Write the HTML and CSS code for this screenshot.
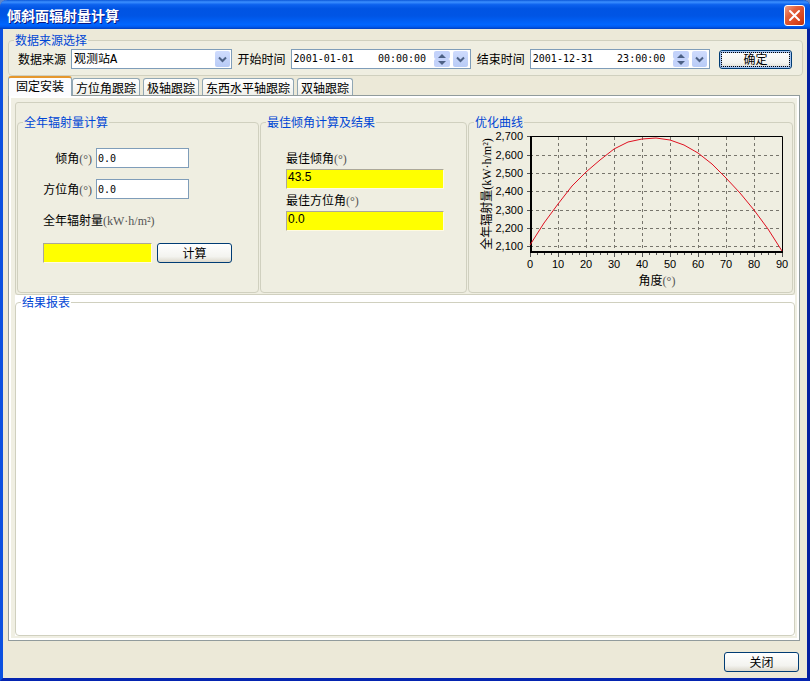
FILE: index.html
```html
<!DOCTYPE html>
<html lang="zh-CN">
<head>
  <meta charset="UTF-8">
  <meta name="viewport" content="width=device-width, initial-scale=1.0">
  <title>倾斜面辐射量计算</title>
  <link rel="stylesheet" href="styles.css">
</head>
<body>
  <div class="window">
    <header class="titlebar">
      <h1>倾斜面辐射量计算</h1>
      <button class="close-x" aria-label="关闭窗口">
        <svg width="13" height="13" viewBox="0 0 13 13"><path d="M2 2L11 11M11 2L2 11" stroke="#fff" stroke-width="2" stroke-linecap="round"/></svg>
      </button>
    </header>

    <main class="content">
      <fieldset class="source">
        <legend>数据来源选择</legend>
        <div class="source-row">
          <label for="station">数据来源</label>
          <div class="box combo">
            <select id="station">
              <option>观测站A</option>
            </select>
            <span class="drop combo-arrow"><svg width="9" height="7" viewBox="0 0 9 7"><path d="M1 1.5L4.5 5L8 1.5" /></svg></span>
          </div>
          <label for="start">开始时间</label>
          <div class="box datetime">
            <input type="text" id="start" value="2001-01-01    00:00:00">
            <span class="spinner">
              <button aria-label="增加"><svg width="8" height="5" viewBox="0 0 8 5"><path d="M0 5L4 1L8 5Z"/></svg></button>
              <button aria-label="减少"><svg width="8" height="5" viewBox="0 0 8 5"><path d="M0 0L4 4L8 0Z"/></svg></button>
            </span>
            <button class="drop" aria-label="选择日期"><svg width="9" height="7" viewBox="0 0 9 7"><path d="M1 1.5L4.5 5L8 1.5"/></svg></button>
          </div>
          <label for="end">结束时间</label>
          <div class="box datetime">
            <input type="text" id="end" value="2001-12-31    23:00:00">
            <span class="spinner">
              <button aria-label="增加"><svg width="8" height="5" viewBox="0 0 8 5"><path d="M0 5L4 1L8 5Z"/></svg></button>
              <button aria-label="减少"><svg width="8" height="5" viewBox="0 0 8 5"><path d="M0 0L4 4L8 0Z"/></svg></button>
            </span>
            <button class="drop" aria-label="选择日期"><svg width="9" height="7" viewBox="0 0 9 7"><path d="M1 1.5L4.5 5L8 1.5"/></svg></button>
          </div>
          <button class="btn btn-ok">确定</button>
        </div>
      </fieldset>

      <div class="tabs" role="tablist">
        <button class="tab active" role="tab" aria-selected="true">固定安装</button>
        <button class="tab" role="tab">方位角跟踪</button>
        <button class="tab" role="tab">极轴跟踪</button>
        <button class="tab" role="tab">东西水平轴跟踪</button>
        <button class="tab" role="tab">双轴跟踪</button>
      </div>

      <section class="tab-panel" role="tabpanel">
        <div class="panel-inner">
          <div class="groups">
            <fieldset>
              <legend>全年辐射量计算</legend>
              <div class="form">
                <div class="form-row">
                  <label for="tilt">倾角<span class="unit">(°)</span></label>
                  <input class="box" type="text" id="tilt" value="0.0">
                </div>
                <div class="form-row">
                  <label for="azimuth">方位角<span class="unit">(°)</span></label>
                  <input class="box" type="text" id="azimuth" value="0.0">
                </div>
                <label class="total-label" for="total">全年辐射量<span class="unit">(kW·h/m²)</span></label>
                <div class="calc-row">
                  <input class="output" type="text" id="total" readonly>
                  <button class="btn">计算</button>
                </div>
              </div>
            </fieldset>

            <fieldset>
              <legend>最佳倾角计算及结果</legend>
              <div class="best">
                <label for="bestTilt">最佳倾角<span class="unit">(°)</span></label>
                <input class="output" type="text" id="bestTilt" value="43.5" readonly>
                <label for="bestAzimuth">最佳方位角<span class="unit">(°)</span></label>
                <input class="output" type="text" id="bestAzimuth" value="0.0" readonly>
              </div>
            </fieldset>

            <fieldset>
              <legend>优化曲线</legend>
              <svg class="chart" viewBox="-2 0 323 160">
                <!-- grid -->
                <path class="grid" d="M59 26.5H311M59 44.5H311M59 62.5H311M59 81.5H311M59 99.5H311M59 117.5H311M87.5 8V123M115.5 8V123M143.5 8V123M171.5 8V123M199.5 8V123M227.5 8V123M255.5 8V123M283.5 8V123"/>
                <!-- frame and axes -->
                <path class="frame" d="M59.5 7.5H311.5V123.5"/>
                <path class="axis" d="M60 7V123H312"/>
                <path class="ticks" d="M56 7.5H59M56 26.5H59M56 44.5H59M56 62.5H59M56 81.5H59M56 99.5H59M56 117.5H59M59.5 124V128M87.5 124V128M115.5 124V128M143.5 124V128M171.5 124V128M199.5 124V128M227.5 124V128M255.5 124V128M283.5 124V128M311.5 124V128"/>
                <path class="ticks" d="M66.5 124V126M73.5 124V126M80.5 124V126M94.5 124V126M101.5 124V126M108.5 124V126M122.5 124V126M129.5 124V126M136.5 124V126M150.5 124V126M157.5 124V126M164.5 124V126M178.5 124V126M185.5 124V126M192.5 124V126M206.5 124V126M213.5 124V126M220.5 124V126M234.5 124V126M241.5 124V126M248.5 124V126M262.5 124V126M269.5 124V126M276.5 124V126M290.5 124V126M297.5 124V126M304.5 124V126"/>
                <polyline class="curve" points="59,116 73,94 87,75 101,57 115,43 129,31 143,20 157,13 171,10 185,9 199,11 213,16 227,24 241,35 255,49 269,64 283,81 297,100 311,122"/>
                <g class="y-labels">
                  <text x="52" y="11">2,700</text>
                  <text x="52" y="30">2,600</text>
                  <text x="52" y="48">2,500</text>
                  <text x="52" y="66">2,400</text>
                  <text x="52" y="85">2,300</text>
                  <text x="52" y="103">2,200</text>
                  <text x="52" y="121">2,100</text>
                </g>
                <g class="x-labels">
                  <text x="59" y="139">0</text>
                  <text x="87" y="139">10</text>
                  <text x="115" y="139">20</text>
                  <text x="143" y="139">30</text>
                  <text x="171" y="139">40</text>
                  <text x="199" y="139">50</text>
                  <text x="227" y="139">60</text>
                  <text x="255" y="139">70</text>
                  <text x="283" y="139">80</text>
                  <text x="311" y="139">90</text>
                </g>
                <text class="axis-title" x="186" y="156">角度<tspan class="unit">(°)</tspan></text>
                <text class="axis-title" transform="translate(20 65) rotate(-90)">全年辐射量<tspan class="unit-y">(kW·h/m²)</tspan></text>
              </svg>
            </fieldset>
          </div>

          <div class="report">
            <fieldset>
              <legend>结果报表</legend>
            </fieldset>
          </div>
        </div>
      </section>

      <footer class="footer">
        <button class="btn">关闭</button>
      </footer>
    </main>
  </div>
</body>
</html>
```
FILE: styles.css
```css
* {
  box-sizing: border-box;
}
body {
  margin: 0;
  background-color: #5f86c8;
  font-family: 'Noto Sans CJK SC', sans-serif;
  font-size: 12px;
  line-height: 14px;
  color: #000;
}
button, input, select {
  margin: 0;
  font: inherit;
  color: inherit;
}
.window {
  display: flex;
  flex-direction: column;
  min-height: 100vh;
  border: 3px solid #0a3fd0;
  border-top: none;
  border-left-color: #0b50e0;
  border-right-color: #0420a0;
  border-bottom-color: #0424b0;
  border-radius: 7px 7px 0 0;
  background-color: #ece9d8;
}

/* title bar */
.titlebar {
  display: flex;
  align-items: center;
  justify-content: space-between;
  height: 29px;
  margin: 0 -3px;
  padding: 2px 5px 0 7px;
  border-radius: 7px 7px 0 0;
  background: linear-gradient(#0a56d8 0, #3c90ff 7%, #0d62ee 16%, #0054e3 30%, #0055e5 55%, #0066ff 85%, #005bf0 92%, #0040c0 100%);
}
.titlebar h1 {
  margin: 0;
  padding-bottom: 2px;
  font-size: 14px;
  line-height: 20px;
  color: #fff;
  text-shadow: 1px 1px #0a1883;
}
.close-x {
  display: flex;
  align-items: center;
  justify-content: center;
  width: 21px;
  height: 21px;
  padding: 0;
  border: 1px solid #fff;
  border-radius: 3px;
  background: linear-gradient(135deg, #f0a088, #e2603c 35%, #d8431c 75%, #b8300c);
}

/* group boxes */
.content {
  display: flex;
  flex: 1;
  flex-direction: column;
  padding: 4px 5px 6px;
}
fieldset {
  min-width: 0;
  margin: 0;
  padding: 0;
  border: 1px solid #d0d0bf;
  border-radius: 4px;
}
legend {
  margin-left: 5px;
  padding: 0 1px;
  line-height: 14px;
  color: #0046d5;
}
.source {
  padding: 0 10px 6px 9px;
  margin-right: -1px;
  background-color: #efeee1;
}
.source legend {
  margin-left: -4px;
}
.source-row {
  display: flex;
  align-items: center;
  gap: 4px;
  margin-top: 2px;
}
.source-row label {
  flex: none;
  width: 49px;
}
.source-row .box + label {
  margin-left: 2px;
}

/* controls */
.box {
  height: 20px;
  border: 1px solid #7f9db9;
  background-color: #fff;
}
.combo {
  position: relative;
  flex: 162 1 0;
  min-width: 0;
}
.combo select {
  width: 100%;
  height: 18px;
  padding: 1px 20px 0 2px;
  border: none;
  background: none;
  font-family: 'Liberation Mono', 'Noto Sans CJK SC', monospace;
  appearance: none;
}
.combo-arrow {
  position: absolute;
  top: 1px;
  right: 1px;
  pointer-events: none;
}
.datetime {
  display: flex;
  align-items: center;
  flex: 180 1 0;
  min-width: 0;
  padding-right: 2px;
  gap: 3px;
}
.datetime input {
  flex: 1;
  min-width: 0;
  padding: 0 0 0 2px;
  border: none;
  background: none;
  font-family: 'DejaVu Sans Mono', monospace;
  font-size: 10px;
}
.drop {
  display: flex;
  align-items: center;
  justify-content: center;
  width: 15px;
  height: 16px;
  padding: 0;
  border: none;
  border-radius: 2px;
  background: linear-gradient(#d0dcfd, #b8cbf6);
}
.drop path {
  fill: none;
  stroke: #4d6185;
  stroke-width: 2;
}
.spinner {
  display: flex;
  flex-direction: column;
  width: 16px;
}
.spinner button {
  display: flex;
  align-items: center;
  justify-content: center;
  height: 8px;
  padding: 0;
  border: none;
  border-radius: 2px;
  background-color: #c3d2fa;
}
.spinner path {
  fill: #4d6185;
}
.btn {
  flex: none;
  width: 75px;
  height: 20px;
  padding: 0;
  border: 1px solid #003c74;
  border-radius: 3px;
  background: linear-gradient(#fff, #f3f3ef 70%, #dcd8cc);
  line-height: 16px;
}
.btn-ok {
  width: 73px;
  height: 19px;
  margin-left: 5px;
  outline: 1px dotted #000;
  outline-offset: -3px;
  box-shadow: inset 0 0 0 2px #a6c4f0;
}
.output {
  height: 20px;
  padding: 0 2px 4px 1px;
  border: 1px solid #aca899;
  border-right-color: #fffbe0;
  border-bottom-color: #fffbe0;
  background-color: #ff0;
  font-family: 'Liberation Sans', sans-serif;
}
.unit {
  font-family: 'Liberation Serif', serif;
  color: #555;
}

/* tabs */
.tabs {
  display: flex;
  align-items: flex-end;
  gap: 3px;
  height: 19px;
}
.tab {
  height: 17px;
  padding: 1px 3px 0;
  border: 1px solid #91a7b4;
  border-bottom: none;
  border-radius: 3px 3px 0 0;
  background: linear-gradient(#fff, #f0f0ea);
  line-height: 16px;
}
.tab.active {
  z-index: 1;
  height: 20px;
  margin: 0 -3px -1px 0;
  padding: 0 7px 2px;
  border-top: 2px solid #e5972d;
  background: #fcfcfe;
}
.tab-panel {
  display: flex;
  flex: 1;
  margin-right: 2px;
  border: 1px solid #919b9c;
  background-color: #fff;
  padding: 2px;
}
.panel-inner {
  display: flex;
  flex: 1;
  flex-direction: column;
  min-width: 0;
  padding: 4px 2px 2px 4px;
  background-color: #f0efe3;
}
.groups {
  display: grid;
  grid-template-columns: 242fr 207fr 325fr;
  gap: 1px;
  padding: 12px 1px 1px;
  border: 1px solid #d0d0bf;
  border-radius: 3px;
  background-color: #efeee1;
}

/* yearly radiation */
.form {
  display: flex;
  flex-direction: column;
  gap: 11px;
  padding: 19px 26px 29px 25px;
}
.form-row {
  display: flex;
  align-items: center;
  gap: 4px;
}
.form-row label {
  width: 49px;
  text-align: right;
  white-space: nowrap;
}
.form-row .box {
  width: 93px;
  padding: 0 1px;
  font-family: 'DejaVu Sans Mono', monospace;
  font-size: 10px;
}
.total-label {
  line-height: 20px;
}
.calc-row {
  display: flex;
  gap: 5px;
  margin-top: 1px;
}
.calc-row .output {
  flex: 1;
  min-width: 0;
}

/* best angle */
.best {
  display: flex;
  flex-direction: column;
  padding: 19px 22px 0 25px;
}
.best label {
  line-height: 20px;
}
.best .output {
  margin-bottom: 1px;
}

/* chart */
.chart {
  display: block;
  width: 100%;
}
.chart text {
  font-size: 12px;
}
.chart .y-labels text, .chart .x-labels text {
  font-family: 'Liberation Sans', sans-serif;
  font-size: 11px;
  text-anchor: middle;
}
.chart .y-labels text {
  text-anchor: end;
}
.chart .axis-title {
  text-anchor: middle;
}
.chart .unit {
  fill: #555;
}
.chart .unit-y {
  font-family: 'Liberation Serif', serif;
}
.grid {
  fill: none;
  stroke: #77756c;
  stroke-dasharray: 3 3;
}
.frame {
  fill: none;
  stroke: #000;
}
.axis {
  fill: none;
  stroke: #000;
  stroke-width: 2;
}
.ticks {
  stroke: #555;
}
.curve {
  fill: none;
  stroke: #e01020;
}

/* report */
.report {
  display: flex;
  flex: 1;
  background-color: #fff;
}
.report fieldset {
  flex: 1;
}

.footer {
  display: flex;
  justify-content: flex-end;
  padding: 11px 3px 0 0;
}
```
